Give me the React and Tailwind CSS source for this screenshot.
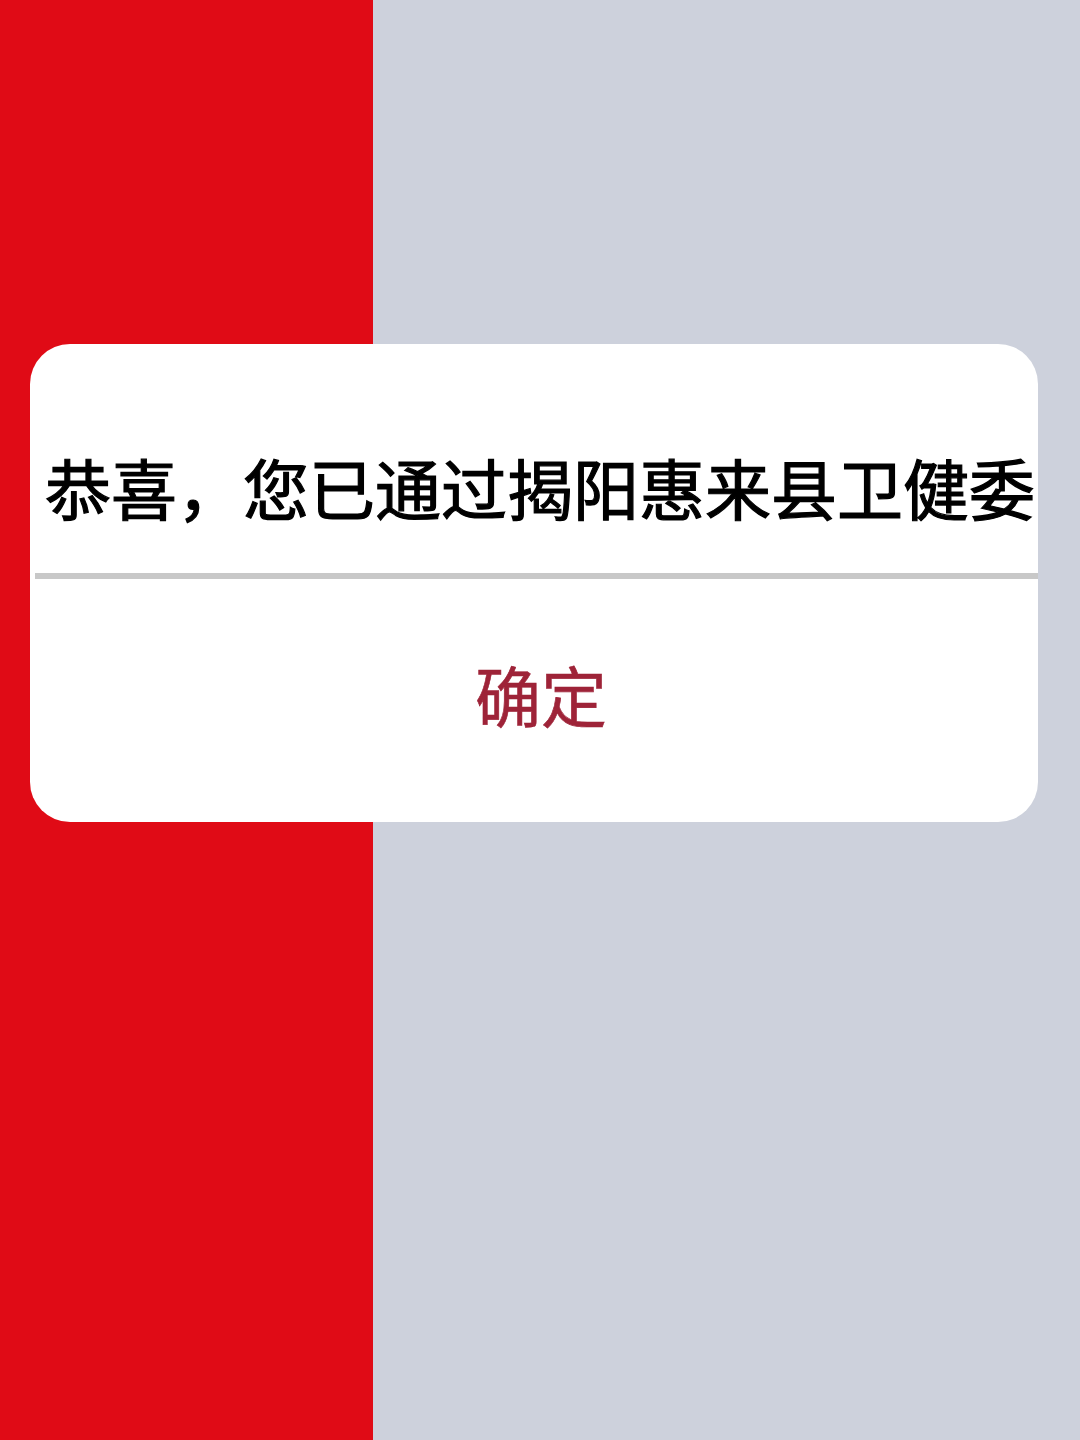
import React from 'react';

const App = () => {
  return (
    <div
      className="relative flex h-[1440px] w-[1080px] overflow-hidden"
      style={{ fontFamily: '"Noto Sans CJK SC", "Noto Sans", sans-serif' }}
    >
      <div className="h-full w-[373px] bg-[#e00b16]" />
      <div className="h-full flex-1 bg-[#cdd1dc]" />

      {/* dialog */}
      <div className="absolute left-[30px] top-[344px] flex h-[478px] w-[1008px] flex-col overflow-hidden rounded-[40px] bg-white">
        <div className="flex h-[229px] justify-center pl-[12px] pt-[109px]">
          <p className="whitespace-nowrap text-[66px] font-normal leading-none text-black [-webkit-text-stroke:1.2px_black]">
            恭喜，您已通过揭阳惠来县卫健委
          </p>
        </div>
        <div className="ml-[5px] h-[6px] bg-[#c8c8c8]" />
        <div className="flex flex-1 items-center justify-center pb-[16px] pl-[14px]">
          <button className="text-[66px] font-normal leading-none text-[#9e2338] [-webkit-text-stroke:0.6px_#9e2338]">确定</button>
        </div>
      </div>
    </div>
  );
};

export default App;
